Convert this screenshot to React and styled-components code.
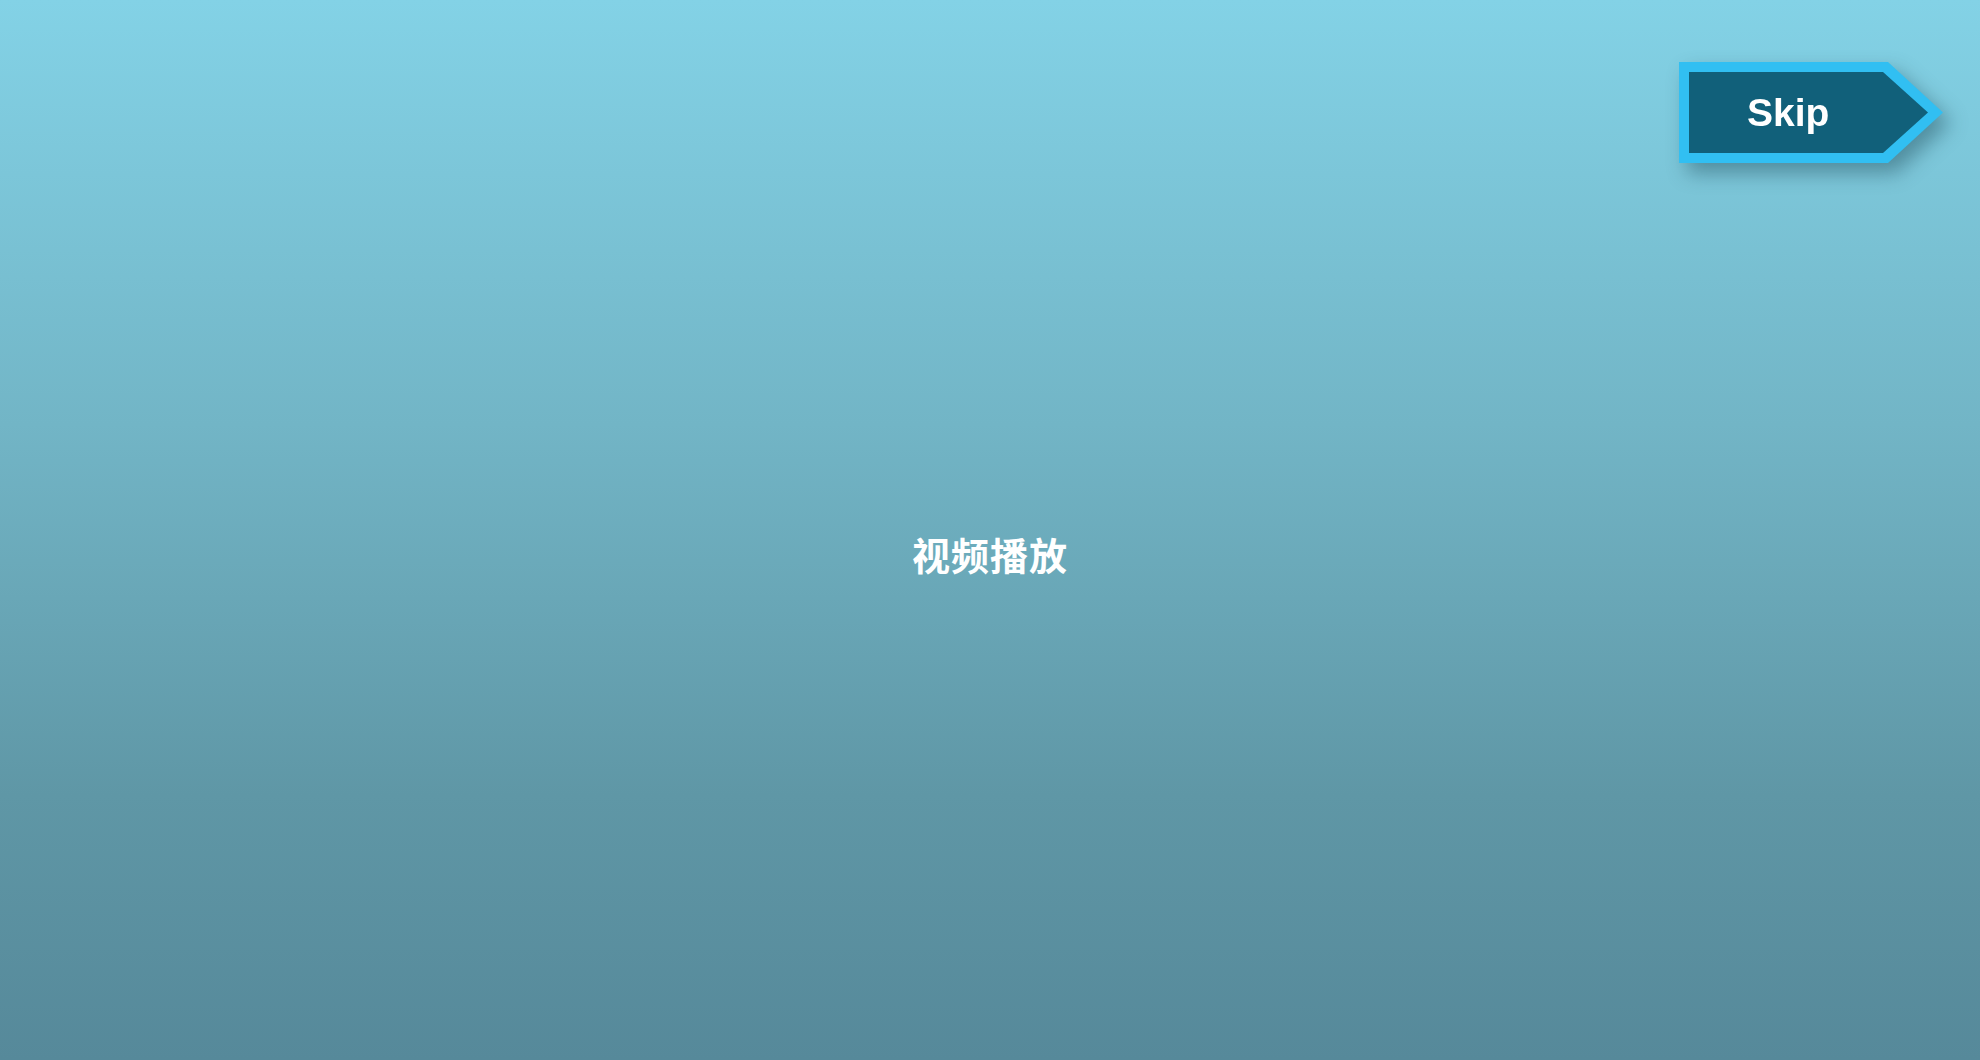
import React from "react";
import styled, { createGlobalStyle } from "styled-components";

const Global = createGlobalStyle`
  html, body { margin: 0; padding: 0; height: 100%; }
  body { font-family: "Liberation Sans", "Noto Sans CJK SC", sans-serif; }
  #root { height: 100%; }
`;

const Stage = styled.div`
  position: relative;
  width: 100vw;
  height: 100vh;
  overflow: hidden;
  background: linear-gradient(180deg, #83d2e6 0%, #72b5c6 40%, #5f97a6 75%, #56899a 100%);
  display: flex;
  align-items: center;
  justify-content: center;
  padding-top: 48px;
  box-sizing: border-box;
`;

const Title = styled.div`
  color: #ffffff;
  font-family: "Noto Sans CJK SC", "Liberation Sans", sans-serif;
  font-weight: 700;
  font-size: 38px;
  letter-spacing: 1px;
  line-height: 1;
`;

const SkipShadow = styled.div`
  position: absolute;
  top: 62px;
  right: 37px;
  filter: drop-shadow(8px 10px 10px rgba(20, 60, 75, 0.42));
  cursor: pointer;
`;

const SkipOuter = styled.div`
  width: 264px;
  height: 101px;
  background: #31bff2;
  clip-path: polygon(0 0, 209px 0, 264px 50.5px, 209px 101px, 0 101px);
  display: flex;
  padding: 10px;
  box-sizing: border-box;
`;

const SkipInner = styled.div`
  flex: 1;
  background: #11607a;
  clip-path: polygon(0 0, 194px 0, 239px 40.5px, 194px 81px, 0 81px);
  display: flex;
  align-items: center;
  padding-left: 58px;
  color: #ffffff;
  font-family: "Liberation Sans", "Helvetica", Arial, sans-serif;
  font-weight: 700;
  font-size: 39px;
`;

export default function App() {
  return (
    <>
      <Global />
      <Stage>
        <Title>视频播放</Title>
        <SkipShadow>
          <SkipOuter>
            <SkipInner>Skip</SkipInner>
          </SkipOuter>
        </SkipShadow>
      </Stage>
    </>
  );
}
